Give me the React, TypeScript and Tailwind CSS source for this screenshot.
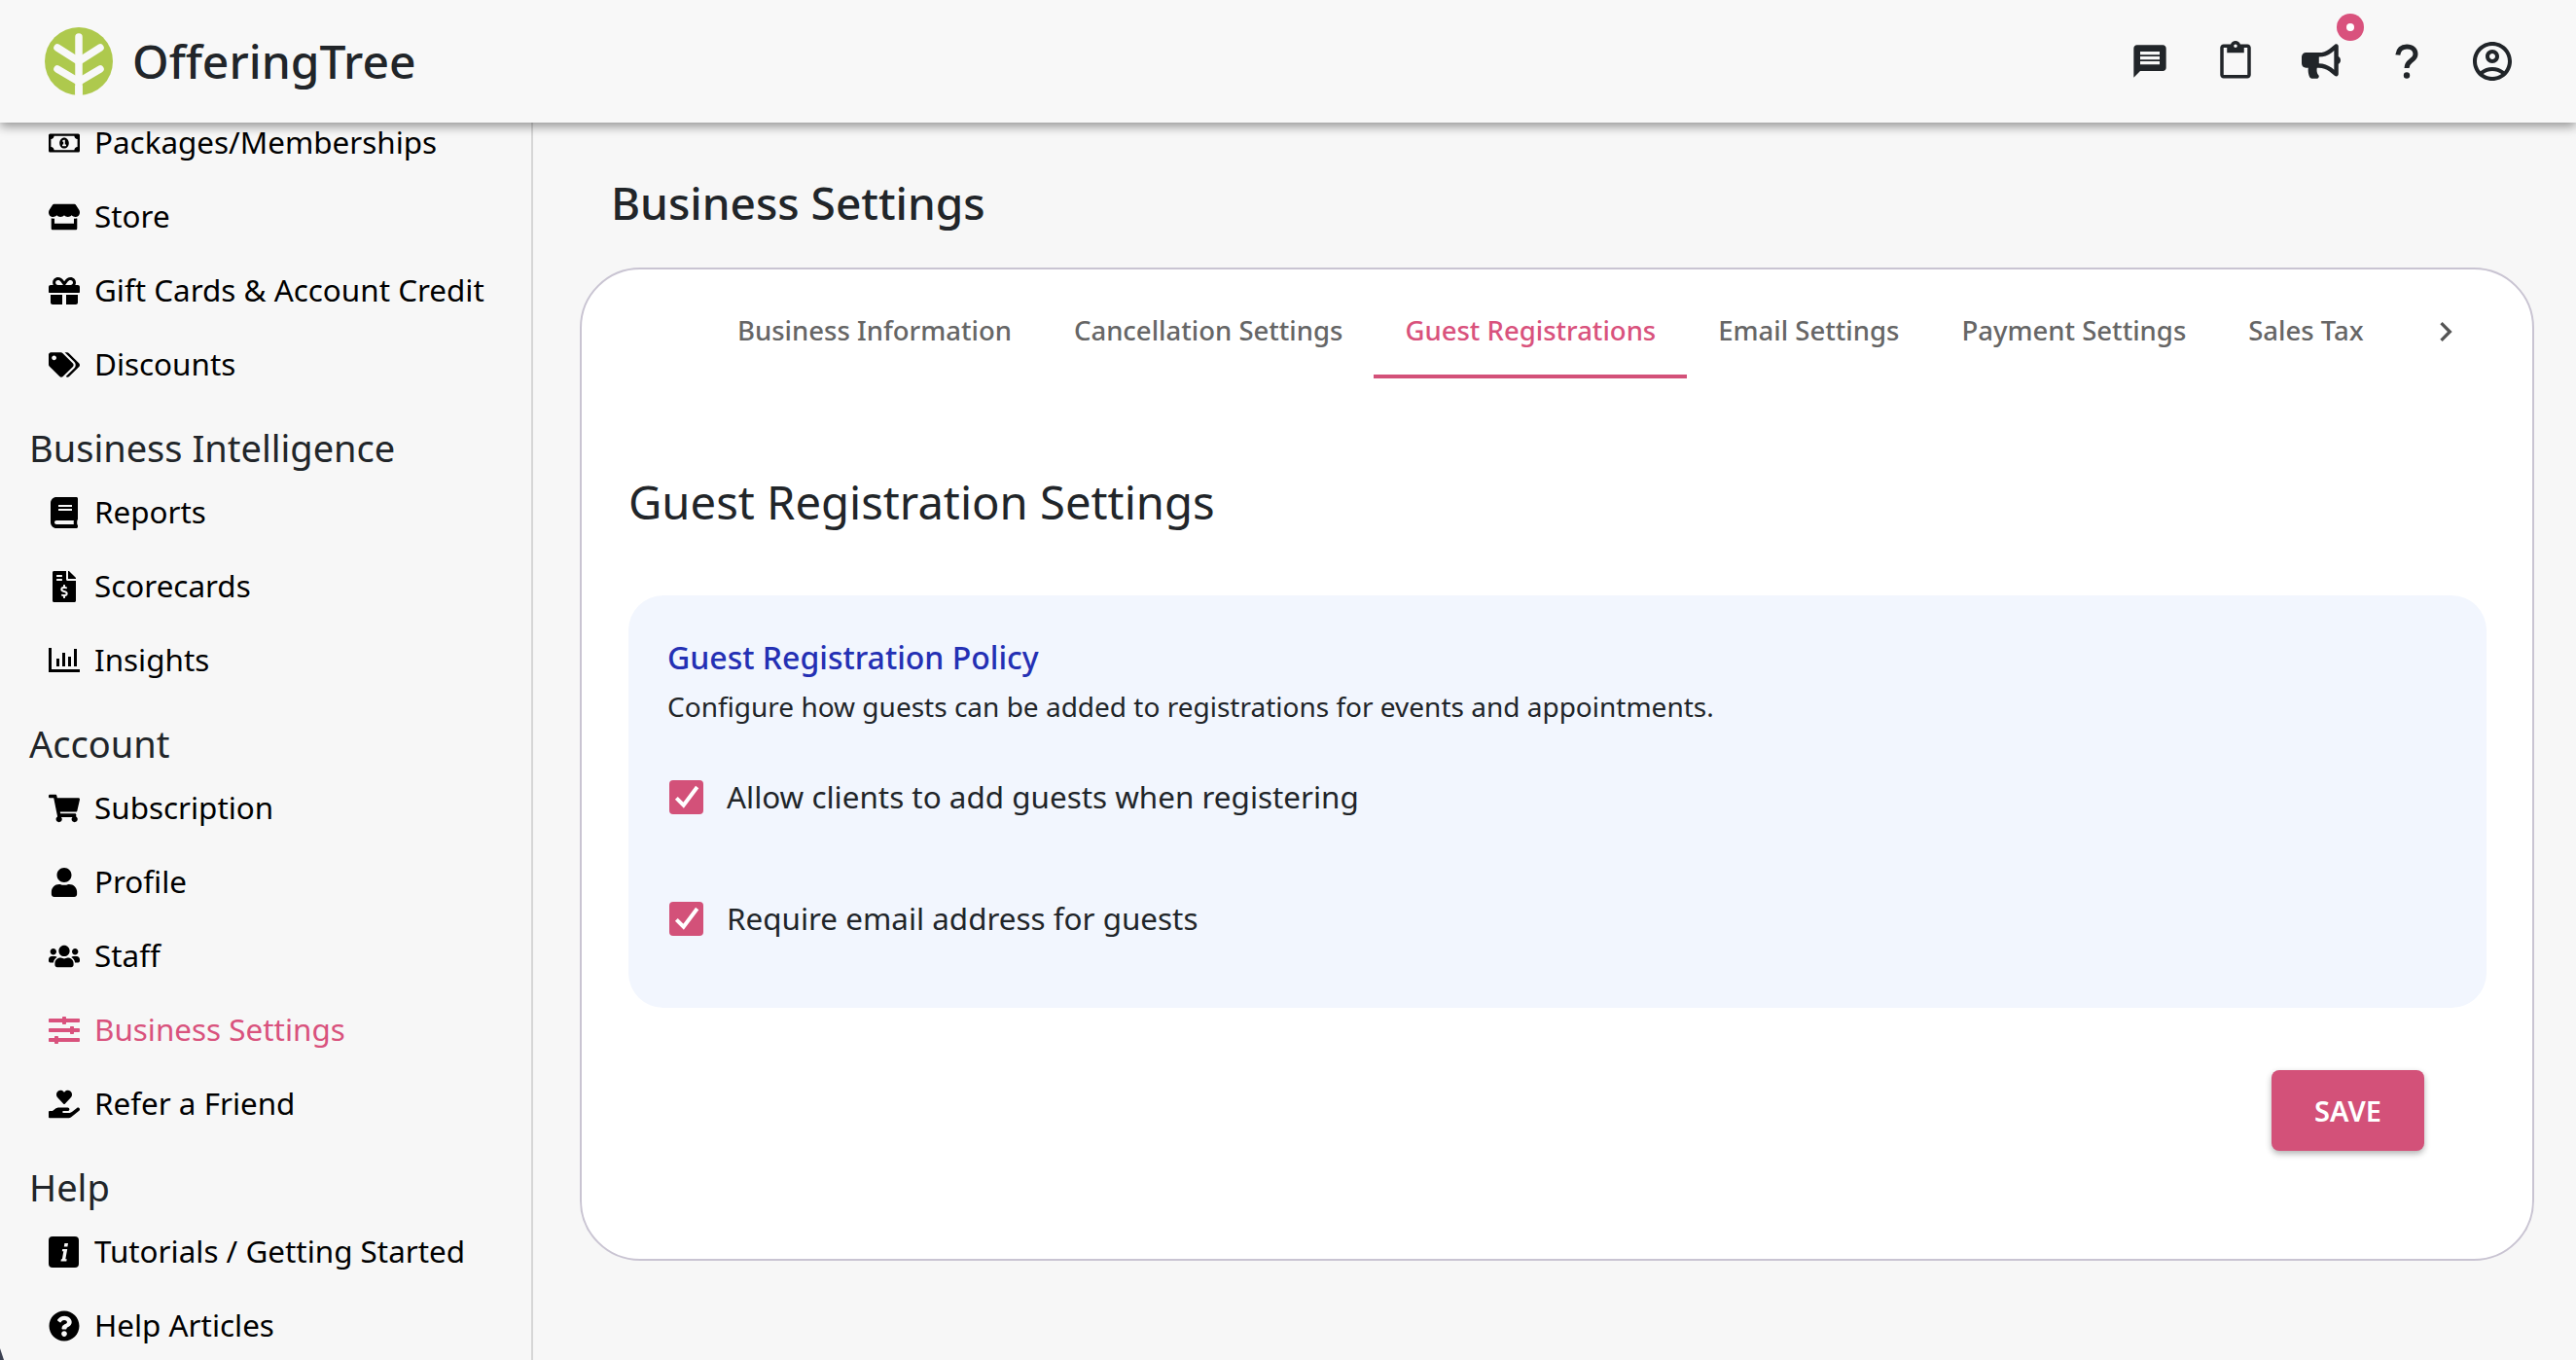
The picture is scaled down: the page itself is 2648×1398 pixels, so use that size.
import React from 'react';
import {
  FaBook,
  FaBullhorn,
  FaFileInvoiceDollar,
  FaGift,
  FaHandHoldingHeart,
  FaQuestionCircle,
  FaRegMoneyBillAlt,
  FaShoppingCart,
  FaSlidersH,
  FaStore,
  FaTags,
  FaUser,
  FaUsers,
} from 'react-icons/fa';
import { MdChevronRight, MdContentPaste, MdMessage, MdOutlineAccountCircle } from 'react-icons/md';

const InsightsIcon = () => (
  <svg viewBox="0 0 32 26" className="w-8 h-[26px] fill-current">
    <path d="M0 0h3v22h29v3H0z" />
    <rect x="8" y="11" width="3" height="8" />
    <rect x="14" y="5" width="3" height="14" />
    <rect x="20" y="9" width="3" height="10" />
    <rect x="26" y="1" width="3" height="18" />
  </svg>
);

const InfoSquareIcon = () => (
  <svg viewBox="0 0 32 32" className="w-8 h-8">
    <rect width="31" height="32" rx="4" fill="currentColor" />
    <path d="M14.2 13h5l-1.9 10.2h1.4l-.4 2.3h-5.8l.4-2.3h1l1.4-7.9h-1.5zM16.4 7h3.6l-.6 3.6h-3.6z" fill="#f7f7f7" />
  </svg>
);

const QuestionIcon = () => (
  <svg viewBox="0 0 24 36" className="w-6 h-9" fill="none" stroke="currentColor" strokeWidth="5">
    <path d="M2.8 11.5C3.6 6 7 3 12 3c5.6 0 9 3.4 9 7.7 0 3.6-2.6 5.2-5 7-2.6 2-4 3.6-4 7.3" />
    <circle cx="12" cy="32.5" r="3.2" fill="currentColor" stroke="none" />
  </svg>
);

const Logo = () => (
  <svg viewBox="0 0 70 70" className="w-[70px] h-[70px]">
    <circle cx="35" cy="35" r="35" fill="#aec94d" />
    <g stroke="#f8f8f8" strokeWidth="7.5" strokeLinecap="round" fill="none">
      <path d="M35 10v58" />
      <path d="M35 35L13 21M35 35l22-14M35 56L13 43M35 56l22-13" />
    </g>
    <path d="M31.2 60h7.6v10h-7.6z" fill="#f8f8f8" />
  </svg>
);

const sections = [
  {
    items: [
      { label: 'Packages/Memberships', icon: <FaRegMoneyBillAlt size={32} /> },
      { label: 'Store', icon: <FaStore size={32} /> },
      { label: 'Gift Cards & Account Credit', icon: <FaGift size={32} /> },
      { label: 'Discounts', icon: <FaTags size={32} /> },
    ],
  },
  {
    title: 'Business Intelligence',
    items: [
      { label: 'Reports', icon: <FaBook size={32} /> },
      { label: 'Scorecards', icon: <FaFileInvoiceDollar size={32} /> },
      { label: 'Insights', icon: <InsightsIcon /> },
    ],
  },
  {
    title: 'Account',
    items: [
      { label: 'Subscription', icon: <FaShoppingCart size={32} /> },
      { label: 'Profile', icon: <FaUser size={30} /> },
      { label: 'Staff', icon: <FaUsers size={32} /> },
      { label: 'Business Settings', icon: <FaSlidersH size={32} />, active: true },
      { label: 'Refer a Friend', icon: <FaHandHoldingHeart size={32} /> },
    ],
  },
  {
    title: 'Help',
    items: [
      { label: 'Tutorials / Getting Started', icon: <InfoSquareIcon /> },
      { label: 'Help Articles', icon: <FaQuestionCircle size={32} /> },
    ],
  },
];

const tabs = ['Business Information', 'Cancellation Settings', 'Guest Registrations', 'Email Settings', 'Payment Settings', 'Sales Tax'];

const CheckRow = ({ label }: { label: string }) => (
  <div className="flex items-center h-[50px]">
    <div className="ml-[2px] mr-6 w-[35px] h-[35px] rounded-[4px] bg-[#d35179] flex items-center justify-center">
      <svg viewBox="0 0 24 24" className="w-[32px] h-[32px]" fill="none" stroke="#fff" strokeWidth="3">
        <path d="M4 13l5.5 5.5L20 4.5" />
      </svg>
    </div>
    <span className="text-[31.4px] leading-10 text-[#212529]">{label}</span>
  </div>
);

export default function App() {
  return (
    <div className="relative h-screen overflow-hidden flex flex-col bg-[#f7f7f7] font-['Noto_Sans',sans-serif]">
      <header className="relative z-10 h-[126px] shrink-0 flex items-center justify-between pl-[46px] pr-[42px] bg-[#f8f8f8] shadow-[0_4px_10px_rgba(0,0,0,0.4)]">
        <div className="flex items-center gap-[20px]">
          <Logo />
          <span className="-mt-px text-[48px] font-medium leading-none text-[#212529]">OfferingTree</span>
        </div>
        <div className="flex items-center text-[#212529]">
          <div className="w-[88px] flex justify-center"><MdMessage size={40} /></div>
          <div className="w-[88px] flex justify-center"><MdContentPaste size={42} /></div>
          <div className="relative w-[88px] flex justify-center">
            <FaBullhorn size={40} />
            <div className="absolute -top-[29px] left-[60px] w-7 h-7 rounded-full bg-[#d9527d] flex items-center justify-center">
              <div className="w-2 h-2 rounded-full bg-white" />
            </div>
          </div>
          <div className="w-[88px] flex justify-center"><QuestionIcon /></div>
          <div className="w-[88px] flex justify-center"><MdOutlineAccountCircle size={48} /></div>
        </div>
      </header>

      <div className="flex-1 min-h-0 flex">
        <aside className="w-[548px] shrink-0 border-r-2 border-[#d6d6d6] overflow-hidden">
          <div className="-mt-[17px]">
            {sections.map((section, i) => (
              <div key={i}>
                {section.title && (
                  <div className="mt-[20px] mb-[2px] h-[54px] flex items-center pl-[30px] text-[38px] text-[#212529]">{section.title}</div>
                )}
                {section.items.map((item) => (
                  <div key={item.label} className={`h-[76px] flex items-center pl-[50px] ${item.active ? 'text-[#d9527d]' : 'text-black'}`}>
                    <div className="w-8 mr-[15px] flex justify-center">{item.icon}</div>
                    <span className="-mt-[2px] text-[31.4px] leading-none whitespace-nowrap">{item.label}</span>
                  </div>
                ))}
              </div>
            ))}
          </div>
        </aside>

        <main className="flex-1 pl-[48px] pr-[43px]">
          <h1 className="pt-[52px] pl-[32px] mb-[37px] text-[46px] leading-[60px] font-medium text-[#212529]">Business Settings</h1>
          <div className="bg-white border-2 border-[#c9c4d2] rounded-[62px]">
            <div className="flex pl-[128px]">
              {tabs.map((tab) => (
                <div
                  key={tab}
                  className={`px-8 pt-[43px] pb-[25px] border-b-4 text-[27.5px] leading-10 font-medium whitespace-nowrap ${tab === 'Guest Registrations' ? 'text-[#d9527d] border-[#d35179]' : 'text-[#666666] border-transparent'}`}
                >
                  {tab}
                </div>
              ))}
              <div className="w-[104px] h-[84px] pt-[44px] flex justify-center text-[#555555]">
                <MdChevronRight size={40} />
              </div>
            </div>

            <div className="pl-[48px] pr-[47px] pb-[111px]">
              <h2 className="mt-[95px] mb-[64px] text-[47.2px] leading-[64px] text-[#212529]">Guest Registration Settings</h2>
              <div className="bg-[#f2f6fe] rounded-[36px] pl-[40px] pt-[44px] pb-[67px]">
                <h3 className="text-[32px] leading-10 font-medium text-[#2430b4]">Guest Registration Policy</h3>
                <p className="mt-[10px] text-[28px] leading-10 text-[#212529]">Configure how guests can be added to registrations for events and appointments.</p>
                <div className="mt-[48px] flex flex-col gap-[75px]">
                  <CheckRow label="Allow clients to add guests when registering" />
                  <CheckRow label="Require email address for guests" />
                </div>
              </div>
              <div className="mt-16 pr-16 flex justify-end">
                <button className="w-[157px] h-[83px] rounded-lg bg-[#d35179] text-white text-[29px] font-semibold shadow-[0_3px_6px_rgba(0,0,0,0.3)]">SAVE</button>
              </div>
            </div>
          </div>
        </main>
      </div>

      {/* window corner showing through at the bottom left */}
      <svg viewBox="0 0 4 12" className="absolute left-0 bottom-0 w-1 h-3">
        <path d="M0 0L4 12H0z" fill="#3c4152" />
      </svg>
    </div>
  );
}
